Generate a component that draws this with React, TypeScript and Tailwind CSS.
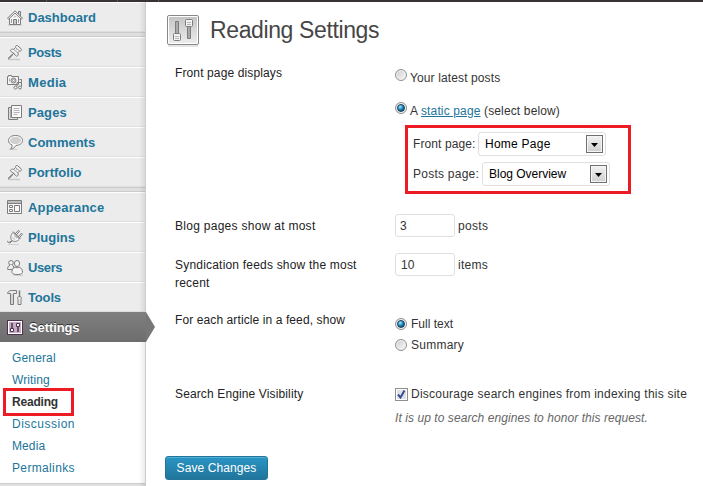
import React from "react";

function Svg({ children }: { children: React.ReactNode }) {
  return (
    <svg className="h-[18px] w-[18px] shrink-0" viewBox="0 0 18 18" fill="none" stroke="#7c7c7c" strokeWidth="1">
      {children}
    </svg>
  );
}

const House = () => (
  <Svg>
    <path d="M2 17h14" stroke="#c4c4c4" />
    <path d="M3.500 10v6.500h11V10" fill="#f6f6f6" />
    <path d="M12.500 6V3.500h2V8" fill="#ddd" />
    <path d="M1.500 10.200L9 2.800l7.500 7.400-1.200.8L9 5l-6.300 6z" fill="#fafafa" strokeLinejoin="round" />
    <path d="M7.500 16.500v-5h3v5z" fill="#c8c8c8" />
    <path d="M8.500 8.500h1M5.500 11v4M12.500 11v4" stroke="#999" />
  </Svg>
);

const Pin = () => (
  <Svg>
    <path d="M2 16.500h12" stroke="#c8c8c8" strokeWidth="1.500" />
    <path d="M6.800 11.200L2.300 15.700" strokeWidth="1.500" />
    <path d="M9.500 4.500c-.4-1.500 1-2.500 2.300-1.700l3.400 3.100c.8 1.200-.2 2.300-1.600 2.100l-1.800 1.800c.8 1.700.2 3.100-1.100 3.500L4.300 7.700c.3-1.300 1.900-2 3.400-1.300z" fill="#f4f4f4" strokeLinejoin="round" />
    <path d="M9.500 4.500l4.100 3.500M7.700 6.400l4.100 3.500" stroke="#9a9a9a" />
    <path d="M7 9l2.500 2.200M9.500 7.500l1.500-1.500" stroke="#c2c2c2" />
  </Svg>
);

const Media = () => (
  <Svg>
    <path d="M1.500 3.500h1v-1h3v1h7v8h-11z" fill="#f6f6f6" />
    <circle cx="7.500" cy="7.500" r="2.500" fill="#ddd" />
    <circle cx="7.500" cy="7.500" r="1" fill="#fff" stroke="#999" />
    <path d="M3.500 5.500v3" stroke="#aaa" />
    <path d="M11 13.500V9.500h4.500v4M13.500 6.500h2v3" />
    <circle cx="9.500" cy="14.500" r="1.500" fill="#eee" />
    <circle cx="14" cy="14.500" r="1.500" fill="#eee" />
  </Svg>
);

const Pages = () => (
  <Svg>
    <path d="M2.500 4.500h9v12h-9z" fill="#ddd" />
    <path d="M4.500 6v9" stroke="#aaa" />
    <path d="M5.500 2.500h10v12h-10z" fill="#f9f9f9" />
    <path d="M7.500 5.500h6M7.500 7.500h6M7.500 9.500h6M7.500 11.500h4" stroke="#b4b4b4" />
  </Svg>
);

const Bubble = () => (
  <Svg>
    <path d="M3 16.500h8" stroke="#cfcfcf" />
    <path d="M9.500 2.500c-4 0-7 2-7 5 0 2.200 1.500 3.700 3.500 4.400.4 1.500-.2 3-1.500 4.100 2.700-.2 4.500-1.600 5.500-3.600 3.700-.2 6.500-2 6.500-4.900 0-3-3-5-7-5z" fill="#fafafa" />
    <path d="M9.500 4c-3.200 0-5.500 1.400-5.500 3.500S6.300 11 9.500 11 15 9.600 15 7.500 12.700 4 9.500 4z" fill="#d0d0d0" stroke="none" />
  </Svg>
);

const Layout = () => (
  <Svg>
    <path d="M1.500 2.500h14v13h-14z" fill="#f8f8f8" />
    <path d="M2 4h13" strokeWidth="2" stroke="#bdbdbd" />
    <path d="M1.500 5.500h14M3.500 7.500h3v2h-3zM3.500 11.500h3v2h-3zM8.500 7.500h5v6h-5z" />
  </Svg>
);

const Plug = () => (
  <Svg>
    <path d="M2 16.500h11" stroke="#d0d0d0" />
    <path d="M5.500 12.500L4 14c-1.500 1.200-2.800.5-2.300-1.200M6 13l-2.200 2.200" />
    <path d="M7 4.500l6.500 6.500c-2.300 2.600-5.200 3.200-7.500 1.500-2-2-1.500-5.500 1-8z" fill="#f4f4f4" />
    <path d="M7 3.500l7.500 7.500M9 6l3.500-3.800 1 1L10.300 7M12 9l3.500-3.800 1 1L13.300 10" fill="#eee" />
    <path d="M6.500 9.500l2.500 2M8 7.500l3 2.800" stroke="#b0b0b0" />
  </Svg>
);

const Users = () => (
  <Svg>
    <path d="M7 17.300h10" stroke="#c8c8c8" />
    <circle cx="5" cy="4.800" r="2.300" fill="#f1f1f1" />
    <path d="M4 7C1.800 8 1.500 10 1.700 11.500h5.600C8 10 8 8 6.200 7" fill="#eee" />
    <rect x="8.500" y="2.500" width="5" height="6" rx="2.500" fill="#f6f6f6" />
    <path d="M9 9c-2 1-3.500 3-3 5.500.6 1.600 2.500 2 5 2s5-.4 5.500-2c.3-2.500-1.200-4.500-3.500-5.500-.8 1-3 1-4 0z" fill="#f5f5f5" />
  </Svg>
);

const Tools = () => (
  <Svg>
    <path d="M1.500 5.500c.5-2 2-3 4-3h5v3h-3v11h-3v-11c-1.300-.2-2 .2-3 0z" fill="#e9e9e9" />
    <path d="M6 6v10" stroke="#bbb" />
    <path d="M13.500 2.500v6" strokeWidth="1.500" />
    <path d="M12.500 8.500h2c1.200 1 1 2 .5 3v5h-3v-5c-.5-1-.7-2 .5-3z" fill="#eaeaea" />
  </Svg>
);

const SettingsSmall = () => (
  <svg className="h-[18px] w-[18px] shrink-0" viewBox="0 0 18 18" fill="none">
    <rect x="1.500" y="2.500" width="15" height="14" fill="#c4adc3" stroke="#50304f" />
    <rect x="2.500" y="3.500" width="13" height="12" stroke="#fff" />
    <path d="M6 5v6M12 8v6" stroke="#50304f" strokeWidth="1.500" />
    <path d="M4.500 10.500h3v3h-3zM10.500 5.500h3v3h-3z" fill="#fff" stroke="#50304f" />
  </svg>
);

const SettingsLarge = () => (
  <svg className="h-8 w-8 shrink-0" viewBox="0 0 32 32" fill="none">
    <defs>
      <linearGradient id="plate" x1="0" y1="0" x2="0" y2="1">
        <stop offset="0" stopColor="#c5c5c5" />
        <stop offset="1" stopColor="#ececec" />
      </linearGradient>
    </defs>
    <path d="M1 31h30" stroke="#ccc" />
    <rect x=".5" y=".5" width="31" height="29" rx="1.500" fill="#fff" stroke="#888" />
    <rect x="2" y="2" width="28" height="26" fill="url(#plate)" />
    <path d="M8.500 6.500h3v13h-3zM20.500 11.500h3v12h-3z" fill="#aaa" stroke="#7e7e7e" />
    <rect x="6.500" y="18.500" width="7" height="7" rx="1" fill="#f3f3f3" stroke="#7e7e7e" />
    <rect x="18.500" y="4.500" width="7" height="7" rx="1" fill="#f3f3f3" stroke="#7e7e7e" />
    <path d="M8 21.500h4M8 23.500h4M20 7.500h4M20 9.500h4" stroke="#b5b5b5" />
  </svg>
);

function Item({ icon, label, spacing = "" }: { icon: React.ReactNode; label: string; spacing?: string }) {
  return (
    <a className="flex h-[30px] items-center gap-[4px] border-b border-t border-b-[#dfdfdf] border-t-white bg-[#ececec] pl-[6px] text-[13px] font-bold text-[#21759b]">
      {icon}
      <span className={`pt-[2px] ${spacing}`}>{label}</span>
    </a>
  );
}

const Separator = () => <div className="h-[5px] border-y border-[#ccc] bg-[#dfdfdf]" />;

function Radio({ on = false }: { on?: boolean }) {
  return (
    <span className="flex h-3 w-3 shrink-0 items-center justify-center rounded-full border border-[#8e8f8f] bg-linear-to-br from-[#cdcdcd] to-[#fafafa] shadow-[inset_0_0_0_1px_#f4f4f4]">
      {on && <span className="h-2 w-2 rounded-full border border-[#173b57] bg-[radial-gradient(circle_at_35%_30%,#a9eaff,#1683bd_50%,#0c3452)]" />}
    </span>
  );
}

function Select({ label, spacing }: { label: string; spacing: string }) {
  return (
    <div className="flex h-6 w-[128px] items-center justify-between rounded-[3px] border border-[#dfdfdf] bg-white pl-[6px] pr-[2px] text-black">
      <span className={`whitespace-nowrap ${spacing}`}>{label}</span>
      <span className="flex h-[18px] w-[17px] items-center justify-center border border-[#707070] bg-linear-to-b from-[#f2f2f2] to-[#cfcfcf] pt-[2px] shadow-[inset_0_0_0_1px_#f5f5f5]">
        <svg className="h-1 w-[7px]" viewBox="0 0 7 4">
          <path d="M0 0h7L3.500 4z" fill="#000" />
        </svg>
      </span>
    </div>
  );
}

const Label = ({ children, className = "tracking-[0.12px]" }: { children: React.ReactNode; className?: string }) => (
  <div className={`w-[220px] shrink-0 whitespace-nowrap text-[#222] ${className}`}>{children}</div>
);

export default function App() {
  return (
    <div className="h-[486px] w-[703px] overflow-hidden bg-white font-['Liberation_Sans',Arial,sans-serif] text-[12px] leading-[18px] text-[#333]">
      <div className="flex h-[2px] bg-[#363332]">
        <div className="w-[47px] border-r border-[#555]" />
        <div className="w-[71px] border-r border-[#555]" />
        <div className="w-[41px] border-r border-[#555]" />
      </div>
      <div className="flex h-[484px]">
        <nav className="relative w-[146px] shrink-0 border-r border-[#ccc] bg-[#ececec]">
          <Item icon={<House />} label="Dashboard" />
          <Separator />
          <Item icon={<Pin />} label="Posts" spacing="tracking-[-0.4px]" />
          <Item icon={<Media />} label="Media" spacing="tracking-[0.3px]" />
          <Item icon={<Pages />} label="Pages" spacing="tracking-[0.1px]" />
          <Item icon={<Bubble />} label="Comments" />
          <Item icon={<Pin />} label="Portfolio" />
          <Separator />
          <Item icon={<Layout />} label="Appearance" spacing="tracking-[0.2px]" />
          <Item icon={<Plug />} label="Plugins" />
          <Item icon={<Users />} label="Users" spacing="tracking-[-0.4px]" />
          <Item icon={<Tools />} label="Tools" spacing="tracking-[-0.15px]" />
          <div className="h-[30px]" />
          <div className="flex h-[141px] flex-col items-start bg-white pl-3 pt-[5px] leading-[22px] text-[#21759b]">
            <a className="tracking-[0.15px]">General</a>
            <a className="tracking-[0.1px]">Writing</a>
            <a className="relative font-bold tracking-[-0.2px] text-[#333]">
              Reading
              <span className="absolute -left-[9px] -top-[3px] h-[28px] w-[71px] border-[3px] border-[#ed1c24]" />
            </a>
            <a className="tracking-[0.5px]">Discussion</a>
            <a className="tracking-[0.1px]">Media</a>
            <a className="tracking-[0.35px]">Permalinks</a>
          </div>
          <Separator />
          <div className="absolute right-0 top-0 h-full w-[6px] bg-linear-to-r from-transparent to-black/8" />
          <div className="absolute left-0 top-[310px] flex h-[30px] w-[155px]">
            <div className="flex w-[146px] items-center gap-[5px] bg-linear-to-b from-[#808080] to-[#6d6d6d] pl-[6px] text-[13px] font-bold text-white [text-shadow:0_-1px_0_#333]">
              <SettingsSmall />
              <span className="pt-[2px] tracking-[-0.1px]">Settings</span>
            </div>
            <svg className="h-[30px] w-[9px]" viewBox="0 0 9 30">
              <path d="M0 0L9 15 0 30z" fill="#777" />
            </svg>
          </div>
        </nav>

        <main className="flex w-[557px] flex-col">
          <header className="flex h-[62px] items-start gap-[10px] pl-[21px] pt-[13px]">
            <SettingsLarge />
            <h1 className="whitespace-nowrap pl-px pt-px text-[23px] leading-[29px] tracking-[-0.38px] text-[#464646]">Reading Settings</h1>
          </header>

          <section className="flex h-[150px] pl-[29px]">
            <Label>Front page displays</Label>
            <div className="pt-[5px]">
              <div className="flex h-[33px] items-start gap-[3px]">
                <Radio />
                <span className="tracking-[0.12px]">Your latest posts</span>
              </div>
              <div className="flex h-[23px] items-start gap-[3px]">
                <Radio on />
                <span className="whitespace-nowrap tracking-[0.14px]">
                  A <a className="text-[#21759b] underline">static page</a> (select below)
                </span>
              </div>
              <div className="ml-[10px] flex h-[69px] w-[226px] flex-col gap-[6px] border-[3px] border-[#ed1c24] pl-[5px] pt-[4px]">
                <div className="flex items-center">
                  <span className="w-[65px] whitespace-nowrap tracking-[0.1px]">Front page:</span>
                  <Select label="Home Page" spacing="tracking-[0.25px]" />
                </div>
                <div className="flex items-center">
                  <span className="w-[69px] whitespace-nowrap tracking-[0.25px]">Posts page:</span>
                  <Select label="Blog Overview" spacing="tracking-[-0.02px]" />
                </div>
              </div>
            </div>
          </section>

          <section className="flex h-[39px] items-start pl-[29px]">
            <Label className="pt-[3px] tracking-[0.28px]">Blog pages show at most</Label>
            <div className="flex items-center gap-[3px]">
              <div className="h-[23px] w-[60px] rounded-[3px] border border-[#dfdfdf] pl-1 leading-[22px]">3</div>
              <span className="tracking-[0.3px]">posts</span>
            </div>
          </section>

          <section className="flex h-[60px] items-start pl-[29px]">
            <Label className="pt-[3px] tracking-[0.2px]">
              Syndication feeds show the most
              <br />
              recent
            </Label>
            <div className="flex items-center gap-[3px]">
              <div className="h-[23px] w-[60px] rounded-[3px] border border-[#dfdfdf] pl-[5px] leading-[22px]">10</div>
              <span className="tracking-[0.25px]">items</span>
            </div>
          </section>

          <section className="flex h-[72px] items-start pl-[29px]">
            <Label className="-mt-[2px] tracking-[0.1px]">For each article in a feed, show</Label>
            <div className="flex flex-col gap-[3px] pt-[2px]">
              <div className="flex items-center gap-[4px]">
                <Radio on />
                <span>Full text</span>
              </div>
              <div className="flex items-center gap-[4px]">
                <Radio />
                <span className="tracking-[0.25px]">Summary</span>
              </div>
            </div>
          </section>

          <section className="flex h-[71px] items-start pl-[29px]">
            <Label className="tracking-[0.13px]">Search Engine Visibility</Label>
            <div className="flex flex-col gap-[6px]">
              <div className="flex items-center gap-[3px]">
                <span className="flex h-[13px] w-[13px] items-center justify-center border border-[#8e8f8f] bg-[#dfe3e9] shadow-[inset_0_0_0_1px_#fff]">
                  <svg className="h-[9px] w-[9px]" viewBox="0 0 9 9" fill="none" stroke="#3b4f91" strokeWidth="2">
                    <path d="M1 4.500l2.500 3L7.500.5" />
                  </svg>
                </span>
                <span className="whitespace-nowrap tracking-[0.23px]">Discourage search engines from indexing this site</span>
              </div>
              <em className="whitespace-nowrap tracking-[0.07px] text-[#666]">It is up to search engines to honor this request.</em>
            </div>
          </section>

          <button className="ml-[19px] h-6 w-[103px] shrink-0 rounded-[3px] border border-[#21759b] bg-linear-to-b from-[#2a95c5] to-[#21759b] text-[12px] leading-[22px] tracking-[0.1px] text-white shadow-[inset_0_1px_0_rgba(120,200,230,0.5)]">
            Save Changes
          </button>
        </main>
      </div>
    </div>
  );
}
